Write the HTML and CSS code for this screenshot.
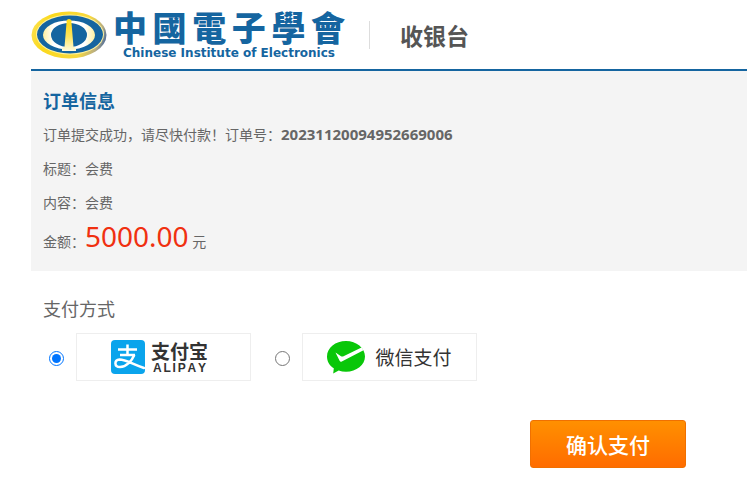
FILE: index.html
```html
<!DOCTYPE html>
<html lang="zh-CN">
<head>
    <meta charset="UTF-8">
    <meta name="viewport" content="width=device-width, initial-scale=1.0">
    <title>收银台</title>
    <link rel="stylesheet" href="styles.css">
</head>
<body>
    <div class="wrapper">
        <header class="header">
            <a class="logo" href="#">
                <svg class="logo-mark" viewBox="0 0 76 48" aria-hidden="true">
                    <defs>
                        <linearGradient id="ring" x1="0" y1="0.4" x2="1" y2="0.6">
                            <stop offset="0" stop-color="#fbe04a"/>
                            <stop offset="0.2" stop-color="#fbd91c"/>
                            <stop offset="0.7" stop-color="#f7d840"/>
                            <stop offset="0.9" stop-color="#b9ae80"/>
                            <stop offset="1" stop-color="#45679c"/>
                        </linearGradient>
                        <linearGradient id="orbit" x1="0" y1="0" x2="1" y2="0">
                            <stop offset="0" stop-color="#fff0a0"/>
                            <stop offset="0.2" stop-color="#ffffff"/>
                            <stop offset="0.8" stop-color="#ffffff"/>
                            <stop offset="1" stop-color="#fff0a0"/>
                        </linearGradient>
                        <linearGradient id="tower" x1="0" y1="0" x2="0" y2="1">
                            <stop offset="0" stop-color="#ffd91a"/>
                            <stop offset="0.5" stop-color="#ffe660"/>
                            <stop offset="1" stop-color="#fffbe0"/>
                        </linearGradient>
                    </defs>
                    <ellipse cx="38" cy="24" rx="37.500" ry="23.500" fill="url(#ring)"/>
                    <ellipse cx="39" cy="23.500" rx="34" ry="20" fill="#fff3a0"/>
                    <ellipse cx="39" cy="23.500" rx="33" ry="19" fill="#1565a0"/>
                    <path fill="url(#orbit)" fill-rule="evenodd" d="M12 24a26 14.500 0 1 0 52 0a26 14.500 0 1 0-52 0zM20 24a18 12 0 1 0 36 0a18 12 0 1 0-36 0z"/>
                    <path fill="url(#tower)" d="M35.500 12h5l2 24l2.500 1v3H31v-3l2.500-1z"/>
                    <circle cx="38" cy="10.500" r="2.500" fill="#ffdf20"/>
                </svg>
                <span class="logo-text">
                    <span class="logo-cn"><b>中</b><b>國</b><b>電</b><b>子</b><b>學</b><b>會</b></span>
                    <span class="logo-en">Chinese Institute of Electronics</span>
                </span>
            </a>
            <h1 class="header-title">收银台</h1>
        </header>

        <section class="order">
            <h2>订单信息</h2>
            <p>订单提交成功，请尽快付款！订单号：<strong>20231120094952669006</strong></p>
            <p>标题：会费</p>
            <p>内容：会费</p>
            <p class="amount">金额：<span class="price">5000.00</span> 元</p>
        </section>

        <form class="payment">
            <h2 id="pay-title">支付方式</h2>
            <div class="pay-list" role="radiogroup" aria-labelledby="pay-title">
                <div class="pay-item">
                    <input type="radio" name="pay" id="alipay" value="alipay" checked>
                    <label class="pay-box alipay" for="alipay">
                        <svg class="alipay-icon" viewBox="0 0 34 34" aria-hidden="true">
                            <rect width="34" height="34" rx="4" fill="#0aa4ec"/>
                            <g fill="none" stroke="#fff">
                                <path stroke-width="2.500" d="M16.500 4.500v11M7 9.500h19M9 15h15"/>
                                <path stroke-width="2.500" stroke-linecap="round" d="M23 15.500c-2 5-7.500 11.500-14 11.500c-6 0-6-7-.5-7.500c6 0 13 4.500 24.500 8.500"/>
                            </g>
                        </svg>
                        <span class="alipay-name">
                            <span class="alipay-cn">支付宝</span>
                            <span class="alipay-en"><i>A</i><i>L</i><i>I</i><i>P</i><i>A</i><i>Y</i></span>
                        </span>
                    </label>
                </div>
                <div class="pay-item">
                    <input type="radio" name="pay" id="wechat" value="wechat">
                    <label class="pay-box wechat" for="wechat">
                        <svg class="wechat-icon" viewBox="0 0 38 33" aria-hidden="true">
                            <path fill="#09c709" d="M19 0C8.500 0 0 6.800 0 15.500c0 5 2.500 9 6.800 11.800L6.200 32.500l5.500-3c2.300.8 4.700 1.200 7.300 1.200c10.500 0 19-6.800 19-15.200S29.500 0 19 0z"/>
                            <path fill="#fff" d="M8.500 11.500l5.500 3.800c.7.400 1.300.4 2 .1L34.500 6.500l2 2.700L14.800 20.500c-1 .5-1.700.2-2.200-.8z"/>
                        </svg>
                        <span>微信支付</span>
                    </label>
                </div>
            </div>
            <div class="actions">
                <button type="submit" class="pay-button">确认支付</button>
            </div>
        </form>
    </div>
</body>
</html>
```

FILE: styles.css
```css
* {
    box-sizing: border-box;
}
body {
    margin: 0;
    font-family: "Noto Sans", "Noto Sans CJK SC", sans-serif;
    font-size: 14px;
    color: #666;
    background-color: #fff;
}
h1, h2, p {
    margin: 0;
}
.wrapper {
    padding-left: 31px;
}
.header {
    display: flex;
    align-items: center;
    height: 71px;
    border-bottom: 2px solid #1565a0;
}
.logo {
    display: flex;
    align-items: center;
    gap: 6px;
    color: #1565a0;
    text-decoration: none;
}
.logo-mark {
    width: 76px;
    height: 48px;
}
.logo-text {
    display: flex;
    flex-direction: column;
    align-items: center;
    width: 232px;
}
.logo-cn {
    display: flex;
    justify-content: space-between;
    width: 100%;
    font-family: "Noto Sans CJK TC", sans-serif;
    font-size: 34px;
    line-height: 36px;
}
.logo-cn b {
    font-weight: 900;
}
.logo-en {
    font-family: "DejaVu Sans", sans-serif;
    font-size: 12px;
    font-weight: bold;
    line-height: 16px;
    white-space: nowrap;
}
.header-title {
    margin-left: 24px;
    padding-left: 30px;
    border-left: 1px solid #ddd;
    font-family: "Noto Sans CJK SC", sans-serif;
    font-size: 23px;
    font-weight: bold;
    line-height: 28px;
    color: #555;
}
.order {
    padding: 12px 12px 13px;
    background-color: #f4f4f4;
}
.order h2 {
    font-family: "Noto Sans CJK SC", sans-serif;
    font-size: 18px;
    line-height: 34px;
    color: #1565a0;
}
.order p {
    line-height: 34px;
}
.order strong {
    font-size: 15px;
}
.order .amount {
    line-height: 32px;
}
.price {
    font-size: 28px;
    color: #f03010;
}
.payment {
    padding: 20px 12px 16px;
}
.payment h2 {
    font-family: "Noto Sans CJK SC", sans-serif;
    font-size: 18px;
    font-weight: normal;
    line-height: 34px;
}
.pay-list {
    display: flex;
    gap: 24px;
    margin-top: 8px;
}
.pay-item {
    display: flex;
    align-items: center;
}
.pay-item input {
    width: 15px;
    height: 15px;
    margin: 2px 12px 0 6px;
}
.pay-item + .pay-item input {
    margin-left: 0;
}
.pay-box {
    display: flex;
    align-items: center;
    justify-content: center;
    width: 175px;
    height: 48px;
    border: 1px solid #eee;
    cursor: pointer;
}
.alipay {
    gap: 6px;
    padding-right: 8px;
    color: #333;
}
.alipay-icon {
    width: 34px;
    height: 34px;
}
.alipay-name {
    display: flex;
    flex-direction: column;
}
.alipay-cn {
    font-family: "Noto Sans CJK SC", sans-serif;
    font-size: 19px;
    font-weight: bold;
    line-height: 22px;
}
.alipay-en {
    display: flex;
    justify-content: space-between;
    padding: 0 2px;
    font-family: "Liberation Sans", Arial, sans-serif;
    font-size: 12px;
    font-weight: bold;
    line-height: 13px;
}
.alipay-en i {
    font-style: normal;
}
.wechat {
    gap: 10px;
    font-size: 19px;
    color: #333;
}
.wechat-icon {
    width: 38px;
    height: 33px;
}
.actions {
    display: flex;
    justify-content: flex-end;
    margin-top: 39px;
    padding-right: 49px;
}
.pay-button {
    width: 156px;
    height: 48px;
    padding: 0;
    border: 1px solid #f07000;
    border-radius: 3px;
    background: linear-gradient(#ff9000, #ff6c00);
    font-family: "Noto Sans CJK SC", sans-serif;
    font-size: 21px;
    font-weight: 500;
    color: #fff;
    cursor: pointer;
}
.pay-button:hover {
    background: linear-gradient(#ff9a1a, #ff7814);
}
```
